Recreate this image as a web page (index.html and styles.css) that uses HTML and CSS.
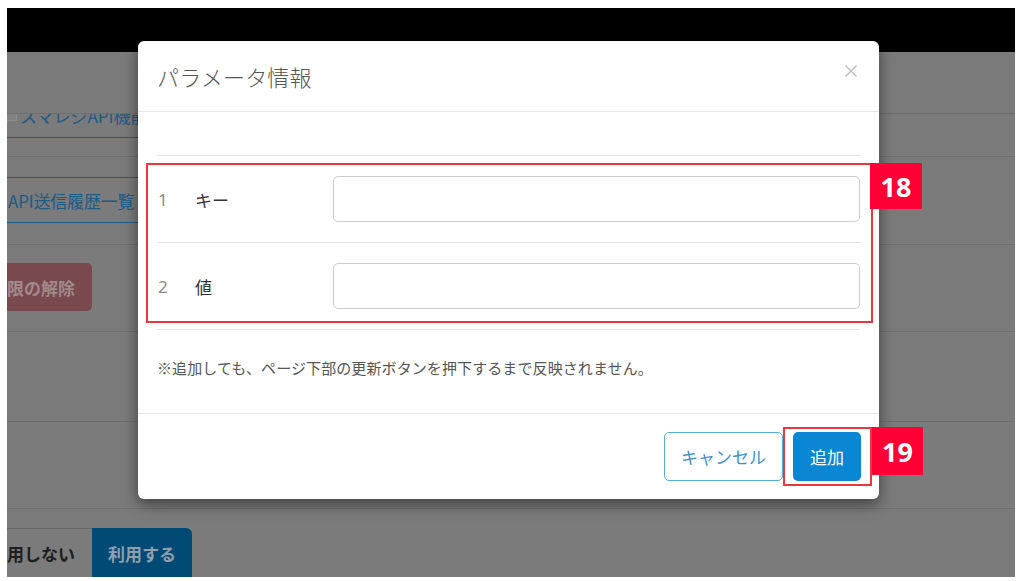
FILE: index.html
```html
<!DOCTYPE html>
<html lang="ja">
<head>
<meta charset="utf-8">
<title>パラメータ情報</title>
<link rel="stylesheet" href="styles.css">
</head>
<body>
<div class="screen">
  <div class="topbar"></div>
  <div class="page">
    <div class="subhead"></div>
    <div class="row row-a">
      <div class="tab tab-api"><span class="chk"></span>スマレジAPI機能</div>
    </div>
    <div class="row row-b">
      <div class="tab tab-hist">API送信履歴一覧</div>
    </div>
    <div class="row row-c">
      <div class="btn-danger">限の解除</div>
    </div>
    <div class="row row-d"></div>
    <div class="row row-e"></div>
    <div class="row row-f">
      <div class="btn-group">
        <div class="seg seg-off">用しない</div>
        <div class="seg seg-on">利用する</div>
      </div>
    </div>
  </div>

  <div class="modal">
    <div class="modal-header">
      <h4 class="modal-title">パラメータ情報</h4>
      <svg class="close" width="14" height="14" viewBox="0 0 14 14"><path d="M1.5 1.5 L12.5 12.5 M12.5 1.5 L1.5 12.5" stroke="#c2c2c2" stroke-width="1.6" fill="none"/></svg>
    </div>
    <div class="modal-body">
      <div class="spacer"></div>
      <div class="param-table">
        <div class="param-row">
          <span class="num">1</span>
          <span class="label">キー</span>
          <div class="input"></div>
        </div>
        <div class="param-row">
          <span class="num">2</span>
          <span class="label">値</span>
          <div class="input"></div>
        </div>
      </div>
      <p class="note">※追加しても、ページ下部の更新ボタンを押下するまで反映されません。</p>
    </div>
    <div class="modal-footer">
      <div class="btn btn-cancel">キャンセル</div>
      <div class="btn btn-add">追加</div>
    </div>

    <div class="mark mark-18"></div>
    <div class="badge badge-18">18</div>
    <div class="mark mark-19"></div>
    <div class="badge badge-19">19</div>
  </div>
</div>
</body>
</html>
```

FILE: styles.css
```css
* { box-sizing: border-box; }

html, body {
  margin: 0;
  padding: 0;
  background: #fff;
}

body {
  font-family: "Noto Sans CJK JP", "Noto Sans", sans-serif;
}

/* page as seen through the dark modal backdrop (colours already dimmed) */
.screen {
  position: relative;
  width: 1008px;
  height: 569px;
  margin: 8px 0 0 7px;
  overflow: hidden;
  background: #7b7b7b;
}

.topbar {
  height: 44px;
  background: #000;
}

.page {
  display: flex;
  flex-direction: column;
}

.subhead {
  height: 62px;
  border-bottom: 1px solid #6e6e6e;
}

.row {
  border-bottom: 1px solid #6e6e6e;
  overflow: hidden;
}

.row-a { height: 43px; }
.row-b { height: 88px; padding-top: 20px; }
.row-c { height: 87px; padding-top: 18px; }
.row-d { height: 90px; }
.row-e { height: 87px; }
.row-f { height: 80px; padding-top: 19px; border-bottom: none; }

.tab {
  width: 200px;
  height: 46px;
  display: flex;
  align-items: center;
  font-size: 17px;
  color: #1c5a88;
  border: 1px solid #1f5b86;
  border-left: none;
  background: #7b7b7b;
}

.tab-api {
  margin-top: -22px;
  padding-left: 13px;
}

.chk {
  display: inline-block;
  width: 10px;
  height: 12px;
  margin-left: -13px;
  margin-right: 3px;
  border: 1px solid #8c8c8c;
  border-left: none;
  background: #858080;
}

.tab-hist {
  padding-left: 1px;
  letter-spacing: -0.2px;
}

.btn-danger {
  width: 85px;
  height: 48px;
  display: flex;
  align-items: center;
  font-size: 17px;
  font-weight: 700;
  color: #a08a8c;
  background: #79494d;
  border-radius: 0 5px 5px 0;
}

.btn-group {
  display: flex;
  height: 50px;
}

.seg {
  display: flex;
  align-items: center;
  font-size: 17px;
  font-weight: 700;
}

.seg-off {
  width: 85px;
  color: #1e1e1e;
  border-top: 1px solid #686868;
  background: #7b7b7b;
}

.seg-on {
  width: 100px;
  justify-content: center;
  color: #8ea0ae;
  background: #004a75;
  border-radius: 0 6px 0 0;
}

/* modal */
.modal {
  position: absolute;
  left: 131px;
  top: 33px;
  width: 741px;
  background: #fff;
  border-radius: 6px;
  box-shadow: 0 5px 15px rgba(0, 0, 0, 0.5);
}

.modal-header {
  height: 71px;
  padding: 0 21px 0 19px;
  display: flex;
  align-items: center;
  justify-content: space-between;
  border-bottom: 1px solid #e8e8e8;
}

.modal-title {
  margin: 0;
  font-size: 22px;
  font-weight: 300;
  color: #555;
  letter-spacing: 0.2px;
}

.close {
  margin-top: -10px;
}

.modal-body {
  padding: 0 19px;
}

.spacer {
  height: 43px;
}

.param-table {
  border-top: 1px solid #e4e4e4;
}

.param-row {
  display: flex;
  align-items: center;
  padding: 20px 0;
  border-bottom: 1px solid #e4e4e4;
}

.num {
  width: 38px;
  padding-left: 1px;
  font-family: "Noto Sans", "Open Sans", sans-serif;
  font-size: 17px;
  color: #8a8a8a;
}

.label {
  width: 138px;
  font-size: 17px;
  color: #333;
}

.input {
  flex: 1;
  height: 46px;
  border: 1px solid #cccccc;
  border-radius: 5px;
  background: #fff;
}

.note {
  margin: 0;
  padding: 27px 0 34px;
  font-size: 15px;
  line-height: 22px;
  color: #555;
  letter-spacing: 0.1px;
}

.modal-footer {
  border-top: 1px solid #e8e8e8;
  padding: 18px;
  display: flex;
  justify-content: flex-end;
  gap: 10px;
}

.btn {
  height: 49px;
  display: flex;
  align-items: center;
  justify-content: center;
  border-radius: 5px;
  font-size: 17px;
}

.btn-cancel {
  width: 119px;
  color: #3d8fca;
  border: 1.5px solid #55ace0;
  background: #fff;
}

.btn-add {
  width: 68px;
  color: #fff;
  background: #0a86d2;
}

/* annotations */
.mark {
  position: absolute;
  border: 2px solid #e8383d;
}

.mark-18 {
  left: 8px;
  top: 122px;
  width: 727px;
  height: 160px;
}

.mark-19 {
  left: 645px;
  top: 386px;
  width: 89px;
  height: 59px;
}

.badge {
  position: absolute;
  display: flex;
  align-items: center;
  justify-content: center;
  background: #ff0035;
  color: #fff;
  font-family: "Open Sans", "Noto Sans", sans-serif;
  font-weight: 700;
  font-size: 27px;
  line-height: 1;
}

.badge-18 {
  left: 732px;
  top: 122px;
  width: 52px;
  height: 46px;
}

.badge-19 {
  left: 734px;
  top: 386px;
  width: 51px;
  height: 48px;
}
```
